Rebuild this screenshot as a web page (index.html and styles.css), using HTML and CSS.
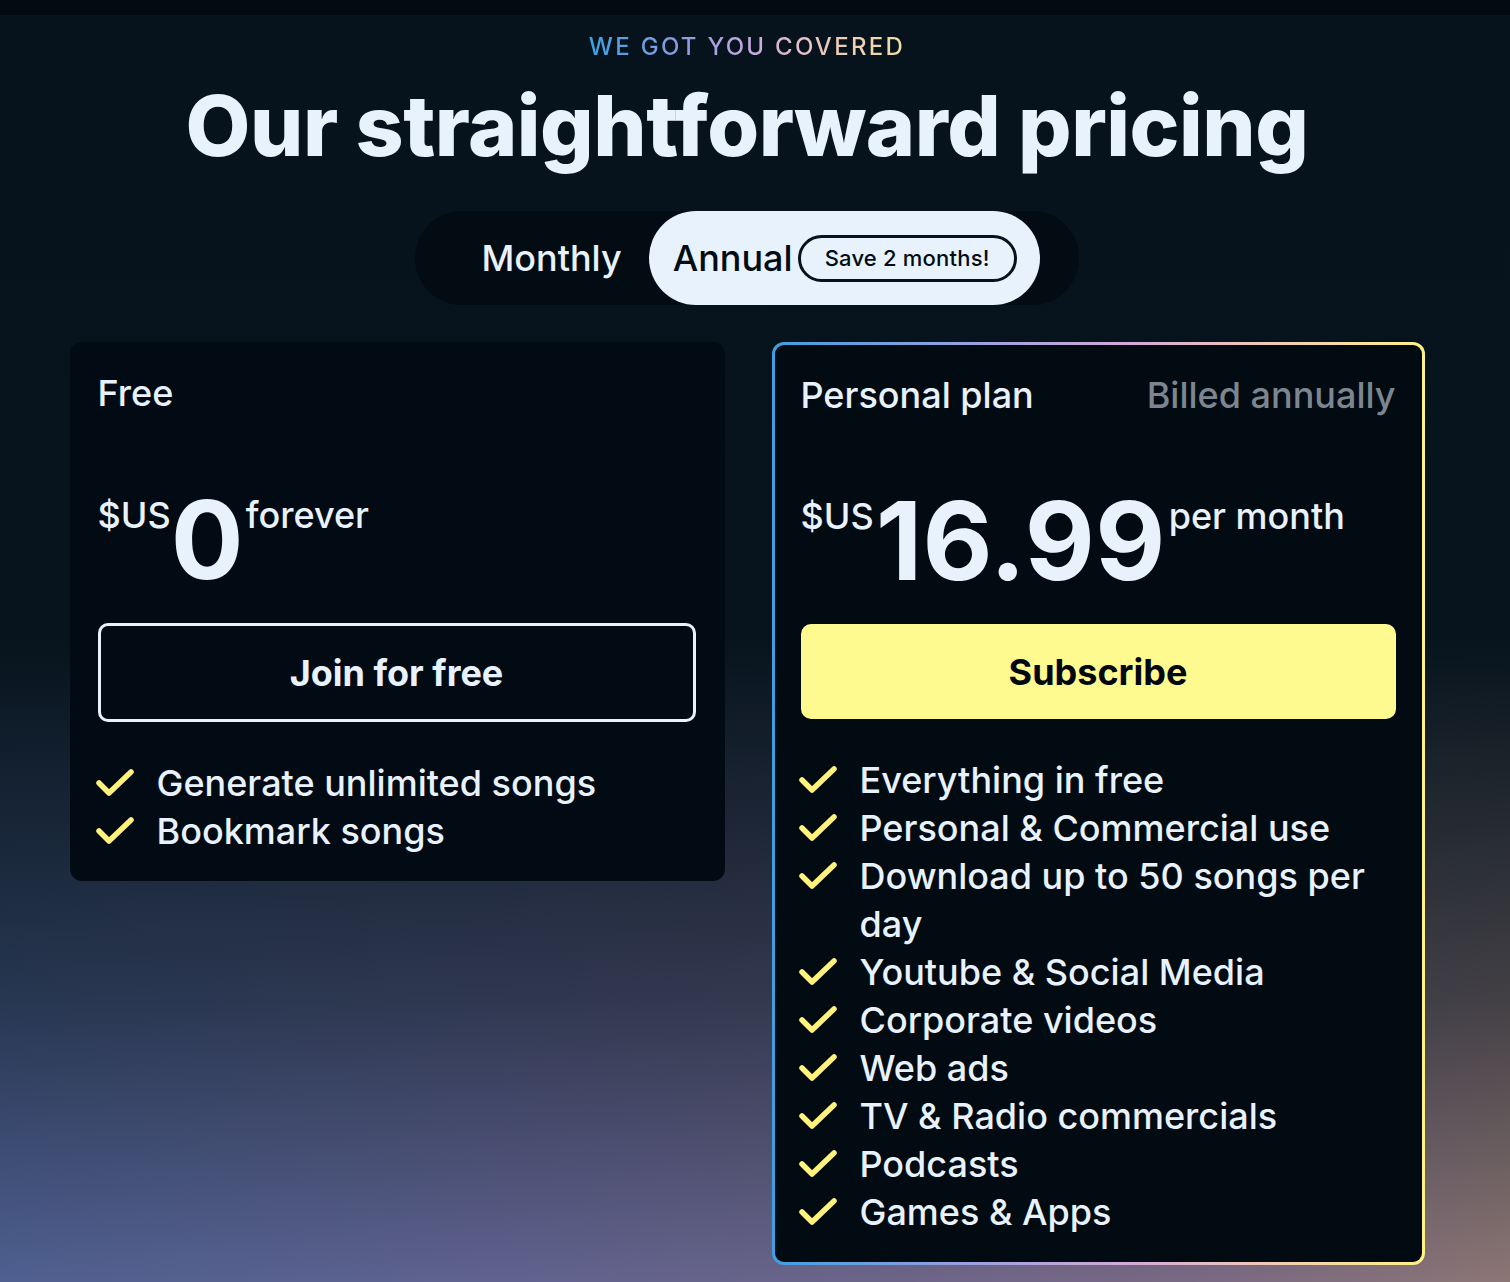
FILE: index.html
```html
<!DOCTYPE html>
<html lang="en">
<head>
<meta charset="utf-8">
<title>Pricing</title>
<link rel="stylesheet" href="styles.css">
</head>
<body>
<div class="topband"></div>
<main class="page">
  <section class="pricing">
    <p class="eyebrow">WE GOT YOU COVERED</p>
    <h1 class="title">Our straightforward pricing</h1>
    <div class="toggle">
      <button class="toggle-btn">Monthly</button>
      <button class="toggle-btn active">Annual <span class="badge">Save 2 months!</span></button>
    </div>
    <div class="plans">
      <article class="card card-free">
        <header class="card-head">
          <h2 class="plan-name">Free</h2>
        </header>
        <div class="price">
          <span class="cur">$US</span><span class="amount">0</span><span class="period">forever</span>
        </div>
        <a class="btn btn-outline" href="#">Join for free</a>
        <ul class="features">
          <li><svg class="check" viewBox="0 0 40 30"><path d="M4 15 L14 25 L36 4"/></svg><span>Generate unlimited songs</span></li>
          <li><svg class="check" viewBox="0 0 40 30"><path d="M4 15 L14 25 L36 4"/></svg><span>Bookmark songs</span></li>
        </ul>
      </article>
      <article class="card card-pro">
        <header class="card-head">
          <h2 class="plan-name">Personal plan</h2>
          <span class="billed">Billed annually</span>
        </header>
        <div class="price">
          <span class="cur">$US</span><span class="amount">16.99</span><span class="period">per month</span>
        </div>
        <a class="btn btn-yellow" href="#">Subscribe</a>
        <ul class="features">
          <li><svg class="check" viewBox="0 0 40 30"><path d="M4 15 L14 25 L36 4"/></svg><span>Everything in free</span></li>
          <li><svg class="check" viewBox="0 0 40 30"><path d="M4 15 L14 25 L36 4"/></svg><span>Personal &amp; Commercial use</span></li>
          <li><svg class="check" viewBox="0 0 40 30"><path d="M4 15 L14 25 L36 4"/></svg><span>Download up to 50 songs per day</span></li>
          <li><svg class="check" viewBox="0 0 40 30"><path d="M4 15 L14 25 L36 4"/></svg><span>Youtube &amp; Social Media</span></li>
          <li><svg class="check" viewBox="0 0 40 30"><path d="M4 15 L14 25 L36 4"/></svg><span>Corporate videos</span></li>
          <li><svg class="check" viewBox="0 0 40 30"><path d="M4 15 L14 25 L36 4"/></svg><span>Web ads</span></li>
          <li><svg class="check" viewBox="0 0 40 30"><path d="M4 15 L14 25 L36 4"/></svg><span>TV &amp; Radio commercials</span></li>
          <li><svg class="check" viewBox="0 0 40 30"><path d="M4 15 L14 25 L36 4"/></svg><span>Podcasts</span></li>
          <li><svg class="check" viewBox="0 0 40 30"><path d="M4 15 L14 25 L36 4"/></svg><span>Games &amp; Apps</span></li>
        </ul>
      </article>
    </div>
  </section>
</main>
</body>
</html>
```
FILE: styles.css
```css
* { box-sizing: border-box; }
html, body { margin: 0; padding: 0; }
body {
  min-height: 1282px;
  font-family: Inter, "Noto Sans", sans-serif;
  color: #e8f2fc;
  background:
    linear-gradient(180deg, #06131c 0px, #07141d 640px, rgba(7,20,29,0.55) 1000px, rgba(7,20,29,0) 1282px),
    linear-gradient(90deg, #4f6091 0%, #61638f 35%, #6d6589 60%, #7a6a84 80%, #8c7675 100%);
  overflow: hidden;
}
.topband { height: 15px; background: #020a12; }
.page { padding-right: 16px; }
.pricing {
  width: 1355px;
  margin: 0 auto;
  display: flex;
  flex-direction: column;
  align-items: center;
}
.eyebrow {
  margin: 17px 0 0;
  font-size: 24px;
  line-height: 30px;
  font-weight: 500;
  letter-spacing: 2.3px;
  background: linear-gradient(90deg, #3da2e2 0%, #8e9be0 30%, #c4a8df 50%, #ebc4c4 70%, #f2dea0 100%);
  -webkit-background-clip: text;
  background-clip: text;
  color: transparent;
}
.title {
  margin: 16px 0 0;
  font-size: 84px;
  line-height: 96px;
  font-weight: 800;
  letter-spacing: -0.5px;
  color: #e8f2fc;
}
.toggle {
  margin-top: 37px;
  display: flex;
  align-items: center;
  height: 94px;
  padding: 0 39px;
  border-radius: 47px;
  background: #030b13;
}
.toggle-btn {
  height: 94px;
  border: 0;
  background: transparent;
  font-family: inherit;
  font-size: 36px;
  font-weight: 500;
  color: #e8f2fc;
  padding: 0 27px;
  border-radius: 47px;
  display: flex;
  align-items: center;
  gap: 5px;
  cursor: pointer;
}
.toggle-btn.active {
  background: #e8f2fc;
  color: #030b13;
  padding: 0 23px 0 24px;
}
.badge {
  display: inline-flex;
  align-items: center;
  height: 47px;
  padding: 0 24px;
  border: 3px solid #0a1219;
  border-radius: 24px;
  font-size: 22px;
  font-weight: 500;
  letter-spacing: 0.2px;
}
.plans {
  margin-top: 37px;
  width: 100%;
  display: grid;
  grid-template-columns: 655px 653px;
  justify-content: space-between;
  align-items: start;
}
.card {
  background: #020a13;
  border-radius: 12px;
  border: 3px solid #020a13;
  padding: 26px 26px 23px 25px;
}
.card-pro {
  border: 3px solid transparent;
  padding: 28px 26px 26px 26px;
  background:
    linear-gradient(#020a12, #020a12) padding-box,
    linear-gradient(90deg, #3e9fe0 0%, #9aa0e0 30%, #d4aad8 55%, #f0c8b8 75%, #fff287 100%) border-box;
}
.card-head {
  display: flex;
  justify-content: space-between;
  align-items: baseline;
}
.plan-name {
  margin: 0;
  font-size: 36px;
  line-height: 44px;
  font-weight: 500;
}
.billed {
  font-size: 36px;
  line-height: 44px;
  font-weight: 500;
  color: #7d8690;
}
.price {
  margin-top: 76px;
  display: flex;
  align-items: flex-start;
  height: 110px;
}
.card-pro .price { margin-top: 75px; }
.cur, .period {
  font-size: 36px;
  line-height: 48px;
  font-weight: 500;
}
.amount {
  font-size: 108px;
  line-height: 110px;
  font-weight: 700;
  letter-spacing: 0.3px;
  margin: -6px 2px 0 0;
}
.card-pro .amount { margin: -6px 3px 0 2px; }
.btn {
  display: flex;
  align-items: center;
  justify-content: center;
  height: 99px;
  margin-top: 22px;
  border-radius: 10px;
  font-size: 36px;
  font-weight: 700;
  text-decoration: none;
}
.btn-outline {
  border: 3px solid #e8f2fc;
  color: #e8f2fc;
}
.btn-yellow {
  height: 95px;
  margin-top: 22px;
  background: #fffa8f;
  color: #02080f;
}
.features {
  list-style: none;
  margin: 37px 0 0;
  padding: 0;
}
.card-pro .features { margin-top: 37px; }
.features li {
  display: flex;
  align-items: flex-start;
  font-size: 36px;
  line-height: 48px;
  font-weight: 500;
  letter-spacing: 0;
}
.check {
  flex: 0 0 auto;
  width: 40px;
  height: 30px;
  margin: 9px 22px 0 -3px;
  fill: none;
  stroke: #fff27a;
  stroke-width: 5.5;
  stroke-linecap: round;
  stroke-linejoin: round;
}
```
